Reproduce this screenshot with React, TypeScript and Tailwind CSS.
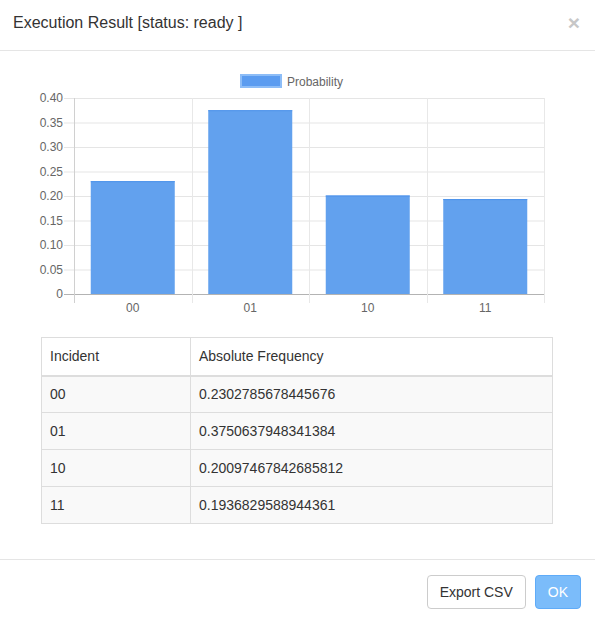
const ROWS = [
  { incident: '00', value: 0.2302785678445676 },
  { incident: '01', value: 0.3750637948341384 },
  { incident: '10', value: 0.20097467842685812 },
  { incident: '11', value: 0.1936829588944361 },
];

const TICKS = ['0', '0.05', '0.10', '0.15', '0.20', '0.25', '0.30', '0.35', '0.40'];

// chart geometry in page pixels (viewBox is offset so coords match the page)
const LEFT = 74;
const RIGHT = 544;
const ZERO = 294;
const STEP = 24.5;
const CAT = (RIGHT - LEFT) / ROWS.length;
const BAR = 84;

function Chart() {
  return (
    <svg width={565} height={256} viewBox="15 66 565 256" className="block">
      {/* legend */}
      <rect x={241} y={75} width={40} height={12} fill="#5b9cf0" stroke="#8dbdf7" strokeWidth={2} />
      <text x={287} y={85.5} fontSize={12} fill="#666" fontFamily="'Liberation Sans', Arial, sans-serif">
        Probability
      </text>

      {/* horizontal grid + y labels */}
      {TICKS.map((t, i) => {
        const y = ZERO - i * STEP;
        return (
          <g key={t}>
            <line x1={64} x2={RIGHT} y1={y + 0.5} y2={y + 0.5} stroke={i === 0 ? '#b3b3b3' : '#e5e5e5'} strokeWidth={1} />
            <text
              x={63}
              y={y + 4}
              fontSize={12}
              fill="#666"
              textAnchor="end"
              fontFamily="'Liberation Sans', Arial, sans-serif"
            >
              {t}
            </text>
          </g>
        );
      })}

      {/* vertical grid */}
      {[0, 1, 2, 3, 4].map((i) => {
        const x = Math.round(LEFT + i * CAT) + 0.5;
        return (
          <line key={i} x1={x} x2={x} y1={98} y2={303} stroke={i === 0 ? '#d0d0d0' : '#e8e8e8'} strokeWidth={1} />
        );
      })}

      {/* bars */}
      {ROWS.map((r, i) => {
        const cx = LEFT + i * CAT + CAT / 2;
        const h = (r.value / 0.05) * STEP;
        return (
          <g key={r.incident}>
            <rect x={cx - BAR / 2} y={ZERO - h} width={BAR} height={h} fill="#62a1ee" />
            <line x1={cx - BAR / 2} x2={cx + BAR / 2} y1={ZERO - h + 0.5} y2={ZERO - h + 0.5} stroke="#4d92ea" strokeWidth={1} />
            <text
              x={cx}
              y={312}
              fontSize={12}
              fill="#666"
              textAnchor="middle"
              fontFamily="'Liberation Sans', Arial, sans-serif"
            >
              {r.incident}
            </text>
          </g>
        );
      })}
    </svg>
  );
}

export default function App() {
  return (
    <div className="w-[595px] h-[621px] overflow-hidden bg-white text-[14px] text-[#333] font-['Liberation_Sans',Arial,sans-serif]">
      {/* Header */}
      <div className="flex items-start justify-between border-b border-[#e5e5e5] pl-[13px] pr-[15px] pt-[14px] h-[51px]">
        <h4 className="text-[16px] leading-[18px] m-0 font-normal text-[#333]">Execution Result [status: ready ]</h4>
        <button className="text-[21px] leading-none font-bold text-[#c7c7c7] -mt-[2px]">×</button>
      </div>

      {/* Body */}
      <div className="p-[15px]">
        <Chart />

        <table className="w-[512px] ml-[26px] mt-[15px] mb-[20px] border-collapse">
          <thead>
            <tr className="bg-white">
              <th className="w-[149px] border border-[#ddd] border-b-2 px-2 h-[38px] text-left font-normal">Incident</th>
              <th className="border border-[#ddd] border-b-2 px-2 h-[38px] text-left font-normal">Absolute Frequency</th>
            </tr>
          </thead>
          <tbody>
            {ROWS.map((r) => (
              <tr key={r.incident} className="bg-[#f9f9f9]">
                <td className="border border-[#ddd] px-2 h-[37px]">{r.incident}</td>
                <td className="border border-[#ddd] px-2 h-[37px]">{r.value}</td>
              </tr>
            ))}
          </tbody>
        </table>
      </div>

      {/* Footer */}
      <div className="flex justify-end gap-[9px] border-t border-[#e5e5e5] px-[14px] pt-[15px]">
        <button className="h-[34px] px-3 rounded-[4px] border border-[#ccc] bg-white text-[#333] text-[14px]">Export CSV</button>
        <button className="h-[34px] px-3 rounded-[4px] border border-[#5fabf8] bg-[#7bbcfa] text-white text-[14px]">OK</button>
      </div>
    </div>
  );
}
